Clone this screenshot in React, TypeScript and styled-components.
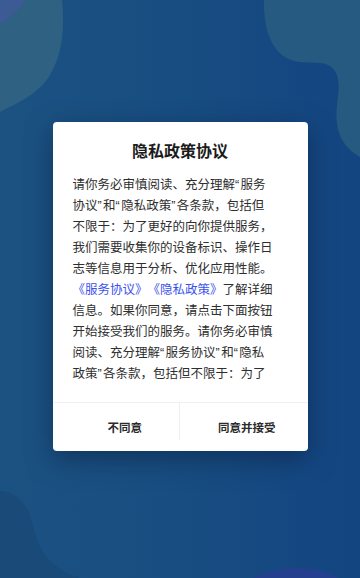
import React from 'react'
import styled, { createGlobalStyle } from 'styled-components'

const GlobalStyle = createGlobalStyle`
  html, body {
    margin: 0;
    padding: 0;
  }
  body {
    font-family: "Liberation Sans", "Noto Sans CJK SC", sans-serif;
    -webkit-font-smoothing: antialiased;
  }
`

const Screen = styled.div`
  position: relative;
  width: 360px;
  height: 578px;
  overflow: hidden;
  display: flex;
  align-items: center;
  justify-content: center;
  padding-bottom: 5px;
  box-sizing: border-box;
  background: linear-gradient(90deg, #1c5282 0%, #184d81 50%, #134581 100%);
`

const Backdrop = styled.svg`
  position: absolute;
  inset: 0;
  width: 360px;
  height: 578px;
`

const Dialog = styled.div`
  position: relative;
  z-index: 1;
  width: 255px;
  height: 329px;
  background: #fff;
  border-radius: 4px;
  box-shadow: 0 8px 26px rgba(8, 28, 58, 0.5);
  display: flex;
  flex-direction: column;
  overflow: hidden;
`

const Title = styled.h2`
  margin: 19px 0 0;
  font-family: "Liberation Sans", "Noto Sans CJK SC", sans-serif;
  font-size: 16px;
  line-height: 22px;
  font-weight: 700;
  color: #1b1b1b;
  text-align: center;
`

const Body = styled.div`
  margin: 11.5px 0 0;
  padding: 0 34px 0 20px;
  height: 210px;
  overflow-y: auto;
  scrollbar-width: none;
  &::-webkit-scrollbar {
    display: none;
  }
`

const Paragraph = styled.p`
  margin: 0;
  font-size: 12.5px;
  line-height: 21px;
  color: #2e2e2e;
  word-break: break-all;
  text-spacing-trim: space-all;
`

const Quote = styled.span`
  letter-spacing: 0.11em;
`

const Link = styled.a`
  color: #3b52ee;
  text-decoration: none;
`

const Actions = styled.div`
  margin-top: auto;
  display: flex;
  border-top: 1px solid #f0f0f0;
  height: 48px;
`

const Action = styled.button<{ $shift: number; $divider?: boolean }>`
  flex: 0 0 50%;
  box-sizing: border-box;
  position: relative;
  border: none;
  background: transparent;
  padding: 0 0 0 ${({ $shift }) => $shift}px;
  font-family: "Liberation Sans", "Noto Sans CJK SC", sans-serif;
  font-size: 11.5px;
  font-weight: 700;
  color: #2b2b2b;
  cursor: pointer;
  &::after {
    content: '';
    display: ${({ $divider }) => ($divider ? 'block' : 'none')};
    position: absolute;
    right: 0;
    top: 0;
    width: 1px;
    height: 37px;
    background: #efefef;
  }
`

const q = (s: string) => <Quote>{s}</Quote>

export default function App() {
  return (
    <>
      <GlobalStyle />
      <Screen>
        <Backdrop viewBox="0 0 360 578">
          <path d="M0,0 H62 C65,30 62,55 50,75 C38,95 15,104 0,112 Z" fill="#2f6182" />
          <path d="M0,0 H26 C20,10 10,18 0,24 Z" fill="#3c5a93" />
          <path
            d="M264,0 C263,32 274,60 300,62 L320,63 C335,64 341,76 338,96 C335,118 334,142 360,157 L360,0 Z"
            fill="#275a80"
          />
          <path d="M0,491 C18,492 28,505 33,525 C38,548 46,566 80,578 L0,578 Z" fill="#194a78" />
          <path d="M254,578 C270,569 290,567 302,568 C318,569 330,573 338,578 Z" fill="#243f8d" />
        </Backdrop>
        <Dialog>
          <Title>隐私政策协议</Title>
          <Body>
            <Paragraph>
              请你务必审慎阅读、充分理解{q('“')}服务协议{q('”')}和{q('“')}隐私政策{q('”')}各条款，包括但不限于：为了更好的向你提供服务，我们需要收集你的设备标识、操作日志等信息用于分析、优化应用性能。
              <Link>《服务协议》</Link>
              <Link>《隐私政策》</Link>
              了解详细信息。如果你同意，请点击下面按钮开始接受我们的服务。请你务必审慎阅读、充分理解{q('“')}服务协议{q('”')}和{q('“')}隐私政策{q('”')}各条款，包括但不限于：为了更好的向你提供服务，我们需要收集你的设备标识、操作日志等信息用于分析、优化应用性能。
            </Paragraph>
          </Body>
          <Actions>
            <Action $shift={17} $divider>
              不同意
            </Action>
            <Action $shift={6}>同意并接受</Action>
          </Actions>
        </Dialog>
      </Screen>
    </>
  )
}
